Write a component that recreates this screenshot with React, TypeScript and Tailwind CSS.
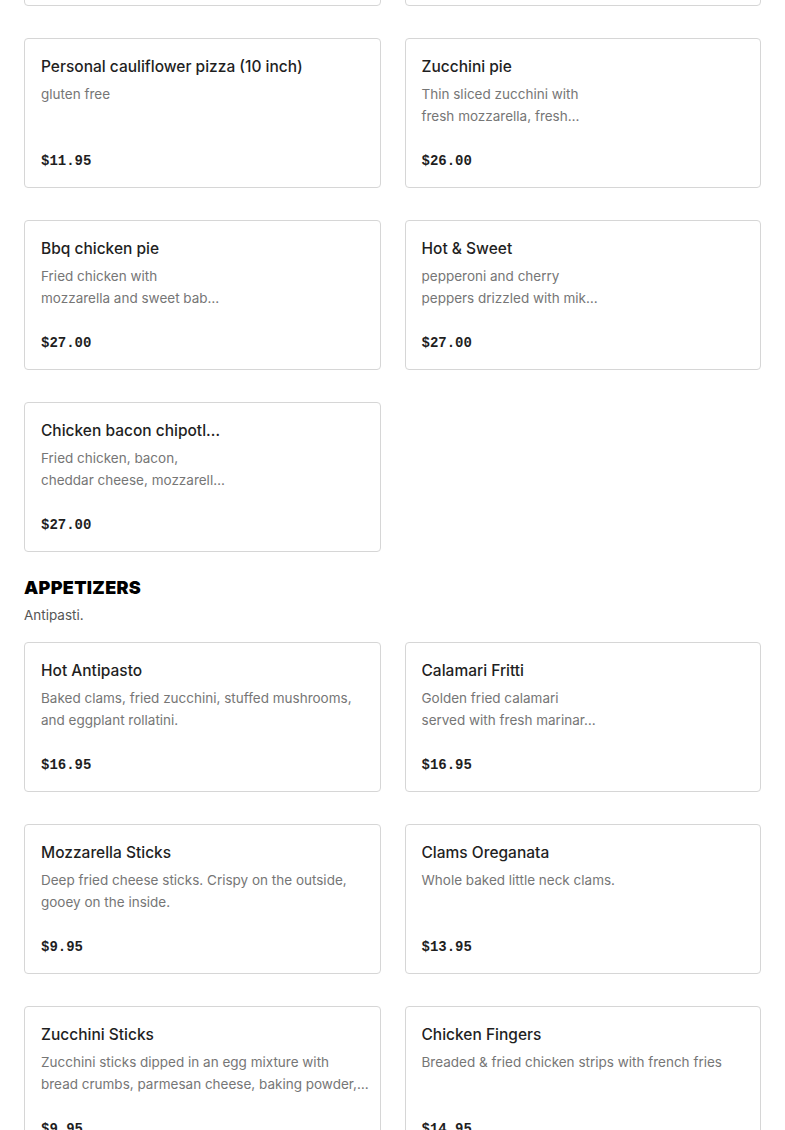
type Item = { name: string; desc: string[]; price: string };

const topRow: Item[] = [
  { name: "", desc: [], price: "" },
  { name: "", desc: [], price: "" },
];

const pizzas: Item[] = [
  { name: "Personal cauliflower pizza (10 inch)", desc: ["gluten free"], price: "$11.95" },
  { name: "Zucchini pie", desc: ["Thin sliced zucchini with", "fresh mozzarella, fresh…"], price: "$26.00" },
  { name: "Bbq chicken pie", desc: ["Fried chicken with", "mozzarella and sweet bab…"], price: "$27.00" },
  { name: "Hot & Sweet", desc: ["pepperoni and cherry", "peppers drizzled with mik…"], price: "$27.00" },
  { name: "Chicken bacon chipotl…", desc: ["Fried chicken, bacon,", "cheddar cheese, mozzarell…"], price: "$27.00" },
];

const appetizers: Item[] = [
  { name: "Hot Antipasto", desc: ["Baked clams, fried zucchini, stuffed mushrooms,", "and eggplant rollatini."], price: "$16.95" },
  { name: "Calamari Fritti", desc: ["Golden fried calamari", "served with fresh marinar…"], price: "$16.95" },
  { name: "Mozzarella Sticks", desc: ["Deep fried cheese sticks. Crispy on the outside,", "gooey on the inside."], price: "$9.95" },
  { name: "Clams Oreganata", desc: ["Whole baked little neck clams."], price: "$13.95" },
  { name: "Zucchini Sticks", desc: ["Zucchini sticks dipped in an egg mixture with", "bread crumbs, parmesan cheese, baking powder,…"], price: "$9.95" },
  { name: "Chicken Fingers", desc: ["Breaded & fried chicken strips with french fries"], price: "$14.95" },
];

function Card({ item }: { item: Item }) {
  return (
    <div className="flex h-[150px] flex-col rounded-[4px] border border-[#d6d6d6] bg-white px-4 pt-4 pb-4">
      <h3 className="text-[15.5px] leading-6 font-medium text-[#1f1f1f] truncate">{item.name}</h3>
      <div className="mt-1 text-[13.5px] leading-[22px] text-[#767676]">
        {item.desc.map((line, i) => (
          <p key={i} className="whitespace-nowrap">{line}</p>
        ))}
      </div>
      <p className="mt-auto font-['Liberation_Mono',monospace] text-[14px] leading-5 font-bold text-[#1f1f1f]">
        {item.price}
      </p>
    </div>
  );
}

export default function App() {
  return (
    <div className="min-h-screen overflow-hidden bg-white px-6 font-['Inter',sans-serif]">
      <div className="mt-[-144px] grid grid-cols-2 gap-x-6 gap-y-8">
        {topRow.map((item, i) => (
          <Card key={i} item={item} />
        ))}
        {pizzas.map((item, i) => (
          <Card key={i} item={item} />
        ))}
      </div>

      <section className="mt-6">
        <h2 className="text-[18px] leading-6 font-black tracking-[0.3px] text-black">APPETIZERS</h2>
        <p className="mt-[4px] text-[13.5px] leading-[22px] text-[#555]">Antipasti.</p>
        <div className="mt-4 grid grid-cols-2 gap-x-6 gap-y-8">
          {appetizers.map((item, i) => (
            <Card key={i} item={item} />
          ))}
        </div>
      </section>
    </div>
  );
}
